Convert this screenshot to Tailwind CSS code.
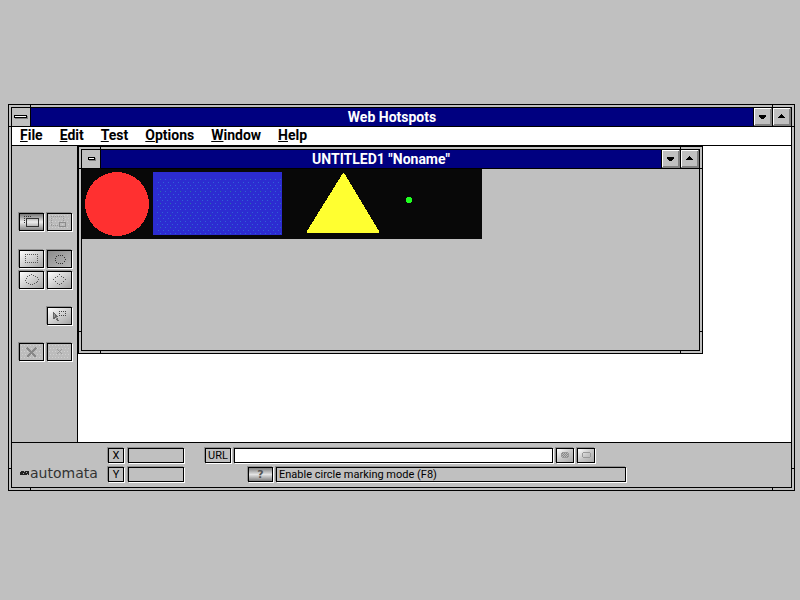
<!DOCTYPE html>
<html lang="en">
<head>
<meta charset="utf-8">
<title>Web Hotspots</title>
<script src="https://cdn.jsdelivr.net/npm/@tailwindcss/browser@4"></script>
</head>
<body class="min-h-screen bg-[#c0c0c0] pt-[104px] pr-[5px] pb-[109px] pl-2 font-[Roboto,sans-serif] text-[11px] text-black">

<!-- Application window: double-line frame with corner notches -->
<main class="relative border border-black bg-[#c0c0c0] p-0.5">
  <i class="absolute top-0 left-[21px] h-0.5 w-px bg-black"></i>
  <i class="absolute top-0 right-[21px] h-0.5 w-px bg-black"></i>
  <i class="absolute bottom-0 left-[21px] h-0.5 w-px bg-black"></i>
  <i class="absolute right-[21px] bottom-0 h-0.5 w-px bg-black"></i>
  <i class="absolute top-[21px] left-0 h-px w-0.5 bg-black"></i>
  <i class="absolute top-[21px] right-0 h-px w-0.5 bg-black"></i>
  <i class="absolute bottom-[21px] left-0 h-px w-0.5 bg-black"></i>
  <i class="absolute right-0 bottom-[21px] h-px w-0.5 bg-black"></i>

  <div class="border border-black">
    <header class="flex h-[19px] border-b border-black bg-[#000080]">
      <button aria-label="System menu" class="flex w-[19px] shrink-0 border-r border-black bg-[#c0c0c0]">
        <svg class="h-[18px] w-[18px]" viewBox="0 0 18 18" shape-rendering="crispEdges"><path fill="#808080" d="M3 8h13v3H3z"/><path d="M2 7h13v3H2z"/><path fill="#fff" d="M3 8h11v1H3z"/></svg>
      </button>
      <h1 class="flex-1 text-center text-[14px] leading-[18px] font-bold text-white">Web Hotspots</h1>
      <button aria-label="Minimize" class="w-[19px] shrink-0 border-l border-black">
        <svg class="h-[18px] w-[18px]" viewBox="0 0 18 18" shape-rendering="crispEdges"><path fill="#c0c0c0" d="M0 0h18v18H0z"/><path fill="#fff" d="M0 0h18v1H1v17H0z"/><path fill="#808080" d="M18 0v18H0v-1h1v-1h15V1h1V0z"/><path d="M5 7h7v2H5zM6 9h5v1H6zM7 10h3v1H7z"/></svg>
      </button>
      <button aria-label="Maximize" class="w-[19px] shrink-0 border-l border-black">
        <svg class="h-[18px] w-[18px]" viewBox="0 0 18 18" shape-rendering="crispEdges"><path fill="#c0c0c0" d="M0 0h18v18H0z"/><path fill="#fff" d="M0 0h18v1H1v17H0z"/><path fill="#808080" d="M18 0v18H0v-1h1v-1h15V1h1V0z"/><path d="M8 6h1v1H8zM7 7h3v1H7zM6 8h5v1H6zM5 9h7v1H5z"/></svg>
      </button>
    </header>

    <nav class="flex h-[19px] gap-[17px] border-b border-black bg-white pl-2 text-[14px] leading-[17px] font-bold">
      <a href="#file"><u>F</u>ile</a>
      <a href="#edit"><u>E</u>dit</a>
      <a href="#test"><u>T</u>est</a>
      <a href="#options"><u>O</u>ptions</a>
      <a href="#window"><u>W</u>indow</a>
      <a href="#help"><u>H</u>elp</a>
    </nav>

    <div class="flex h-[296px]">
      <!-- Tool palette -->
      <aside class="flex w-[66px] shrink-0 flex-col gap-[18px] border-r border-black pt-[67px] pl-[7px]">
        <div class="mb-px flex gap-[3px]">
          <button aria-label="Show window" class="h-[18px] w-[25px] border border-black bg-linear-to-b from-[#777] via-[#eee] to-[#888] shadow-[1px_1px_#fff,-1px_-1px_#909090]">
            <svg class="h-4 w-[23px]" viewBox="0 0 23 16" shape-rendering="crispEdges" fill="none" stroke="#333"><path stroke-dasharray="1 1" d="M4 2.5h8M4.5 4v6M4 4.5h2"/><path d="M6.5 4.5h12v8h-12z"/></svg>
          </button>
          <button aria-label="Fit window" class="h-[18px] w-[25px] border border-black bg-[#bcbcbc] shadow-[1px_1px_#fff,-1px_-1px_#909090]">
            <svg class="h-4 w-[23px]" viewBox="0 0 23 16" shape-rendering="crispEdges" fill="none"><path stroke="#cfcfcf" stroke-dasharray="1 2" d="M1 1.5h21M2 4.5h20M1 7.5h21M2 10.5h20M1 13.5h21"/><path stroke="#999" stroke-dasharray="1 1" d="M3 2.5h13M3.5 4v8M3 11.5h7M15.5 4v4"/><path stroke="#8c8c8c" d="M11.5 8.5h6v4h-6z"/></svg>
          </button>
        </div>
        <div class="grid grid-cols-[25px_25px] gap-[3px]">
          <button aria-label="Rectangle" class="h-[18px] border border-black bg-linear-to-br from-white via-[#d0d0d0] to-[#a4a4a4] shadow-[1px_1px_#fff,-1px_-1px_#909090]">
            <svg class="h-4 w-[23px]" viewBox="0 0 23 16" shape-rendering="crispEdges" fill="none" stroke="#555" stroke-dasharray="1 1"><path d="M5 3.5h13M5 11.5h13M5.5 5v6M17.5 5v6"/></svg>
          </button>
          <button aria-label="Circle" class="h-[18px] border border-black bg-linear-to-br from-[#8c8c8c] to-[#b8b8b8] shadow-[1px_1px_#fff,-1px_-1px_#909090]">
            <svg class="h-4 w-[23px]" viewBox="0 0 23 16" shape-rendering="crispEdges" fill="#333"><path d="M10 4h1v1h-1zM12 4h1v1h-1zM14 4h1v1h-1zM8 5h1v1H8zM16 6h1v1h-1zM7 7h1v1H7zM17 8h1v1h-1zM7 9h1v1H7zM8 11h1v1H8zM16 10h1v1h-1zM10 12h1v1h-1zM12 12h1v1h-1zM14 12h1v1h-1z"/></svg>
          </button>
          <button aria-label="Polygon" class="h-[18px] border border-black bg-linear-to-br from-white via-[#d0d0d0] to-[#a4a4a4] shadow-[1px_1px_#fff,-1px_-1px_#909090]">
            <svg class="h-4 w-[23px]" viewBox="0 0 23 16" shape-rendering="crispEdges" fill="#555"><path d="M9 3h1v1H9zM11 2h1v1h-1zM13 3h1v1h-1zM15 4h1v1h-1zM17 5h1v1h-1zM7 4h1v1H7zM6 6h1v1H6zM5 8h1v1H5zM6 10h1v1H6zM8 11h1v1H8zM10 12h1v1h-1zM12 12h1v1h-1zM14 11h1v1h-1zM16 10h1v1h-1zM18 7h1v1h-1zM17 9h1v1h-1z"/></svg>
          </button>
          <button aria-label="Diamond" class="h-[18px] border border-black bg-linear-to-br from-white via-[#d0d0d0] to-[#a4a4a4] shadow-[1px_1px_#fff,-1px_-1px_#909090]">
            <svg class="h-4 w-[23px]" viewBox="0 0 23 16" shape-rendering="crispEdges" fill="#555"><path d="M11 2h1v1h-1zM9 4h1v1H9zM13 4h1v1h-1zM7 5h1v1H7zM15 5h1v1h-1zM5 7h1v1H5zM17 7h1v1h-1zM7 9h1v1H7zM15 9h1v1h-1zM9 11h1v1H9zM13 11h1v1h-1zM11 12h1v1h-1z"/></svg>
          </button>
        </div>
        <button aria-label="Select" class="ml-7 h-[18px] w-[25px] border border-black bg-linear-to-br from-white via-[#d0d0d0] to-[#a4a4a4] shadow-[1px_1px_#fff,-1px_-1px_#909090]">
          <svg class="h-4 w-[23px]" viewBox="0 0 23 16" shape-rendering="crispEdges" fill="none"><path fill="#666" d="M5 4h1v1h1v1h1v1h1v1h1v1H9v1h1v2h1v1H9v-1H8v-2H7v1H5z"/><path fill="#999" d="M6 6h1v3H6zM8 9h1v2H8z"/><path stroke="#444" stroke-dasharray="1 1" d="M11 3.500h8M11 7.500h8M11.500 5v2M17.500 5v2"/></svg>
        </button>
        <div class="flex gap-[3px]">
          <button aria-label="Delete all" class="h-[18px] w-[25px] border border-black bg-[#bcbcbc] shadow-[1px_1px_#fff,-1px_-1px_#909090]">
            <svg class="h-4 w-[23px]" viewBox="0 0 23 16" shape-rendering="crispEdges" fill="none"><path stroke="#cfcfcf" stroke-dasharray="1 2" d="M1 1.500h21M2 4.500h20M1 7.500h21M2 10.500h20M1 13.500h21"/><path stroke="#888" stroke-width="2" d="m7 4 9 9M16 4l-9 9"/></svg>
          </button>
          <button aria-label="Delete" class="h-[18px] w-[25px] border border-black bg-[#bcbcbc] shadow-[1px_1px_#fff,-1px_-1px_#909090]">
            <svg class="h-4 w-[23px]" viewBox="0 0 23 16" shape-rendering="crispEdges" fill="none"><path stroke="#cfcfcf" stroke-dasharray="1 2" d="M1 1.500h21M2 4.500h20M1 7.500h21M2 10.500h20M1 13.500h21"/><path fill="#999" d="M9 5h1v1H9zM10 6h1v1h-1zM11 7h1v1h-1zM12 8h1v1h-1zM13 9h1v1h-1zM13 5h1v1h-1zM12 6h1v1h-1zM10 8h1v1h-1zM9 9h1v1H9z"/></svg>
          </button>
        </div>
      </aside>

      <!-- Document area -->
      <div class="relative flex-1 bg-white">
        <section class="absolute top-0 left-0 h-[208px] w-[625px] border border-black bg-[#c0c0c0] p-0.5">
          <i class="absolute top-0 left-[21px] h-0.5 w-px bg-black"></i>
          <i class="absolute top-0 right-[21px] h-0.5 w-px bg-black"></i>
          <i class="absolute bottom-0 left-[21px] h-0.5 w-px bg-black"></i>
          <i class="absolute right-[21px] bottom-0 h-0.5 w-px bg-black"></i>
          <i class="absolute top-[21px] left-0 h-px w-0.5 bg-black"></i>
          <i class="absolute top-[21px] right-0 h-px w-0.5 bg-black"></i>
          <i class="absolute bottom-[21px] left-0 h-px w-0.5 bg-black"></i>
          <i class="absolute right-0 bottom-[21px] h-px w-0.5 bg-black"></i>
          <div class="h-full border border-black">
            <header class="flex h-[19px] border-b border-black bg-[#000080]">
              <button aria-label="Document menu" class="flex w-[19px] shrink-0 border-r border-black bg-[#c0c0c0]">
                <svg class="h-[18px] w-[18px]" viewBox="0 0 18 18" shape-rendering="crispEdges"><path fill="#808080" d="M7 8h7v3H7z"/><path d="M6 7h7v3H6z"/><path fill="#fff" d="M7 8h5v1H7z"/></svg>
              </button>
              <h2 class="flex-1 text-center text-[14px] leading-[18px] font-bold text-white">UNTITLED1 "Noname"</h2>
              <button aria-label="Minimize document" class="w-[19px] shrink-0 border-l border-black">
                <svg class="h-[18px] w-[18px]" viewBox="0 0 18 18" shape-rendering="crispEdges"><path fill="#c0c0c0" d="M0 0h18v18H0z"/><path fill="#fff" d="M0 0h18v1H1v17H0z"/><path fill="#808080" d="M18 0v18H0v-1h1v-1h15V1h1V0z"/><path d="M5 7h7v2H5zM6 9h5v1H6zM7 10h3v1H7z"/></svg>
              </button>
              <button aria-label="Maximize document" class="w-[19px] shrink-0 border-l border-black">
                <svg class="h-[18px] w-[18px]" viewBox="0 0 18 18" shape-rendering="crispEdges"><path fill="#c0c0c0" d="M0 0h18v18H0z"/><path fill="#fff" d="M0 0h18v1H1v17H0z"/><path fill="#808080" d="M18 0v18H0v-1h1v-1h15V1h1V0z"/><path d="M8 6h1v1H8zM7 7h3v1H7zM6 8h5v1H6zM5 9h7v1H5z"/></svg>
              </button>
            </header>
            <svg class="block h-[70px] w-[400px]" viewBox="0 0 400 70" shape-rendering="crispEdges" role="img" aria-label="Circle, rectangle, triangle and dot">
              <defs>
                <pattern id="dither" width="10" height="12" patternUnits="userSpaceOnUse"><path fill="#3060d8" d="M1 1h1v1H1zM6 1h1v1H6zM3 4h1v1H3zM8 4h1v1H8zM0 7h1v1H0zM5 7h1v1H5zM3 10h1v1H3z"/><path fill="#2870a8" d="M8 10h1v1H8z"/></pattern>
              </defs>
              <path fill="#080808" d="M0 0h400v70H0z"/>
              <circle cx="35" cy="35" r="32" fill="#ff3030"/>
              <path fill="#2c2cd0" d="M71 3h129v63H71z"/>
              <path fill="url(#dither)" d="M74 8h126v58H74z"/>
              <path fill="#ffff30" d="M261 4h1l35 58v2h-72v-2z"/>
              <circle cx="327" cy="31" r="3" fill="#20ff20"/>
            </svg>
          </div>
        </section>
      </div>
    </div>

    <!-- Status area -->
    <footer class="flex h-[45px] border-t border-black pt-[5px] pl-2 leading-[13px]">
      <div class="flex w-[88px] shrink-0 items-center self-end pb-[7px] font-['DejaVu_Sans',sans-serif] text-[14px] text-[#333]">
        <svg class="mr-px h-1.5 w-[9px] shrink-0" viewBox="0 0 9 6" shape-rendering="crispEdges"><path fill="#222" d="M1 0h8v4H1zM0 1h1v3H0z"/><path fill="#aaa" d="M4 0h1v1H4zM3 2h1v1H3zM6 1h1v1H6zM7 3h1v1H7z"/></svg>
        <span>automata</span>
      </div>
      <div class="flex flex-col gap-1">
        <div class="flex gap-1">
          <label for="x" class="h-[15px] w-4 border border-black text-center shadow-[1px_1px_#fff,-1px_-1px_#909090]">X</label>
          <input id="x" class="h-[15px] w-14 border border-black px-0.5 shadow-[1px_1px_#fff,-1px_-1px_#909090]">
          <label for="url" class="ml-[17px] h-[15px] w-[26px] border border-black text-center shadow-[1px_1px_#fff,-1px_-1px_#909090]">URL</label>
          <input id="url" class="-ml-px h-[15px] w-[319px] border border-black bg-white px-0.5 shadow-[1px_1px_#fff,-1px_-1px_#909090]">
          <button aria-label="Apply URL" class="-ml-px h-[15px] w-[18px] border border-black bg-linear-to-br from-white via-[#c8c8c8] to-[#aaa] shadow-[1px_1px_#fff,-1px_-1px_#909090]">
            <svg class="h-[13px] w-4" viewBox="0 0 16 13" shape-rendering="crispEdges"><path fill="#bbb" stroke="#999" d="M5.500 3.500h5l1 1v3l-1 1h-5l-1-1v-3z"/><path stroke="#888" stroke-dasharray="1 1" d="M5 4.500h6M6 5.500h5M5 6.500h6M6 7.500h5"/></svg>
          </button>
          <button aria-label="Clear URL" class="-ml-px h-[15px] w-[18px] border border-black bg-linear-to-br from-white via-[#c8c8c8] to-[#aaa] shadow-[1px_1px_#fff,-1px_-1px_#909090]">
            <svg class="h-[13px] w-4" viewBox="0 0 16 13" shape-rendering="crispEdges"><path fill="none" stroke="#999" d="M5.500 3.500h6l1 1v3l-1 1h-6l-1-1v-3z"/></svg>
          </button>
        </div>
        <div class="flex gap-1">
          <label for="y" class="h-[15px] w-4 border border-black text-center shadow-[1px_1px_#fff,-1px_-1px_#909090]">Y</label>
          <input id="y" class="h-[15px] w-14 border border-black px-0.5 shadow-[1px_1px_#fff,-1px_-1px_#909090]">
          <button aria-label="Help" class="ml-[60px] h-[15px] w-[25px] border border-black bg-linear-to-b from-[#808080] via-[#e4e4e4] to-[#808080] font-['DejaVu_Sans',sans-serif] font-bold text-[#555] shadow-[1px_1px_#fff,-1px_-1px_#909090]">?</button>
          <output class="-ml-px h-[15px] w-[350px] border border-black pl-0.5 shadow-[1px_1px_#fff,-1px_-1px_#909090]">Enable circle marking mode (F8)</output>
        </div>
      </div>
    </footer>
  </div>
</main>
</body>
</html>
